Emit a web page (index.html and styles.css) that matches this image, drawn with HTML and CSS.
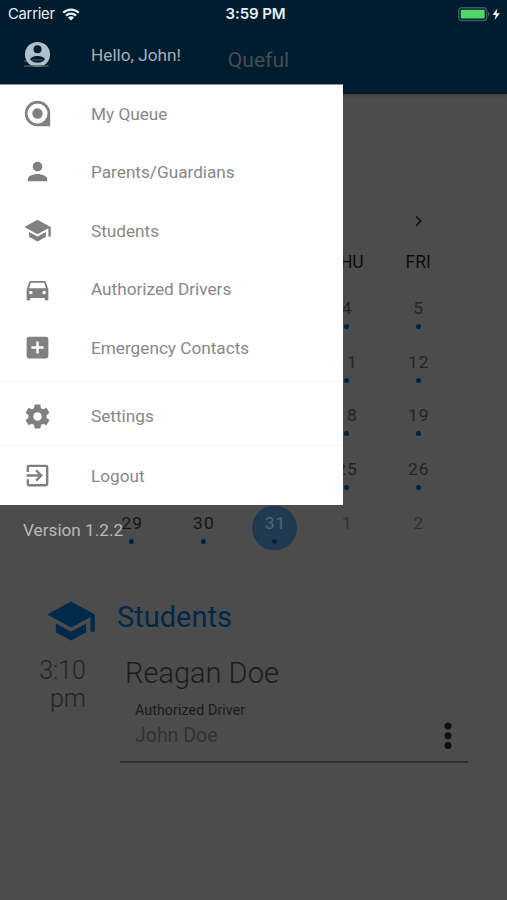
FILE: index.html
```
<!DOCTYPE html>
<html lang="en">
<head>
<meta charset="utf-8">
<title>Queful</title>
<link rel="stylesheet" href="styles.css">
</head>
<body>
<div class="screen">
  <header class="appbar">
    <div class="status">
      <div class="carrier"><span>Carrier</span>
        <svg class="wifi" viewBox="0 0 18 13"><path d="M1.2 4.8a11 11 0 0 1 15.6 0M4 7.8a7 7 0 0 1 10 0" fill="none" stroke="currentColor" stroke-width="2.3"/><path d="M9 12.6 5.9 9.5a4.4 4.4 0 0 1 6.2 0z" fill="currentColor"/></svg>
      </div>
      <div class="clock">3:59 PM</div>
      <svg class="battery" viewBox="0 0 46 16"><rect x="1.7" y="1.7" width="28" height="12.8" rx="3.2" fill="none" stroke="#40586a" stroke-width="1.4"/><path d="M31 5.5c2 .5 2 4.6 0 5.100z" fill="#40586a"/><rect x="3.700" y="3.700" width="24" height="8.800" rx="1" fill="#4cd964"/><path d="M40.400 2.500 35.500 9h3.300l-1.100 5L42.900 7.200h-3.400z" fill="#f2f7fa"/></svg>
    </div>
    <div class="title">Queful</div>
  </header>

  <main>
    <section class="calendar">
      <div class="month-nav"><svg viewBox="0 0 24 24"><path d="m8.600 16.600 4.600-4.600-4.600-4.600L10 6l6 6-6 6z" fill="currentColor"/></svg></div>
      <div class="grid weekdays"><span></span><span></span><span></span><span>THU</span><span>FRI</span></div>
      <div class="grid week"><span></span><span></span><span></span><span class="day">4</span><span class="day">5</span></div>
      <div class="grid week"><span></span><span></span><span></span><span class="day">11</span><span class="day">12</span></div>
      <div class="grid week"><span></span><span></span><span></span><span class="day">18</span><span class="day">19</span></div>
      <div class="grid week"><span></span><span></span><span></span><span class="day">25</span><span class="day">26</span></div>
      <div class="grid week"><span class="day dark">29</span><span class="day dark">30</span><span class="day selected">31</span><span class="day next">1</span><span class="day next">2</span></div>
    </section>

    <section class="students">
      <div class="section-head">
        <svg viewBox="0 0 24 24"><path d="M5 13.200v4L12 21l7-3.800v-4L12 17zM12 3 1 9l11 6 9-4.900V17h2V9z" fill="currentColor"/></svg>
        <h2>Students</h2>
      </div>
      <div class="pickup">
        <div class="time">3:10<br>pm</div>
        <div class="student">
          <div class="name">Reagan Doe</div>
          <div class="driver">
            <div><div class="label">Authorized Driver</div><div class="value">John Doe</div></div>
            <svg class="more" viewBox="0 0 8 28"><circle cx="4" cy="4" r="3.500"/><circle cx="4" cy="13.700" r="3.500"/><circle cx="4" cy="23.400" r="3.500"/></svg>
          </div>
        </div>
      </div>
    </section>
  </main>

  <aside class="drawer">
    <div class="greeting">
      <svg class="icon" viewBox="0 0 24 24"><path d="M1 17.500h20M1 21.500h20" stroke="#474d50" stroke-width="1.300"/><circle cx="12" cy="12" r="10.400" fill="#b0bfca"/><circle cx="12" cy="7.600" r="3.300" fill="#001c2f"/><path d="M6 16.200c0-2 3.300-3 6-3s6 1 6 3c-1.400 1.800-3.700 2.600-6 2.600s-4.600-.8-6-2.600z" fill="#001c2f"/><path d="M7.500 16.500h9" stroke="#474d50" stroke-width="1"/><path d="M1 21.500h20" stroke="#474d50" stroke-width="1.300" opacity=".8"/></svg>
      <span>Hello, John!</span>
    </div>
    <nav class="menu">
      <a class="item queue"><svg class="icon" viewBox="0 0 24 24"><path fill-rule="evenodd" d="M22.500 22.500H12A10.500 10.500 0 1 1 22.500 12zM12 3.700a8.300 8.300 0 1 0 0 16.600 8.300 8.300 0 0 0 0-16.600z"/><circle cx="12" cy="12" r="4.300"/></svg><span>My Queue</span></a>
      <a class="item parents"><svg class="icon" viewBox="0 0 24 24"><circle cx="12" cy="8" r="4"/><path d="M4 20v-2c0-2.700 5.300-4 8-4s8 1.300 8 4v2z"/></svg><span>Parents/Guardians</span></a>
      <a class="item pupils"><svg class="icon" viewBox="0 0 24 24"><path d="M5 13.200v4L12 21l7-3.800v-4L12 17zM12 3 1 9l11 6 9-4.900V17h2V9z"/></svg><span>Students</span></a>
      <a class="item drivers"><svg class="icon" viewBox="0 0 24 24"><path fill-rule="evenodd" d="M18.900 6c-.2-.6-.8-1-1.400-1h-11c-.7 0-1.200.4-1.400 1L3 12v8c0 .6.500 1 1 1h1c.6 0 1-.4 1-1v-1h12v1c0 .6.500 1 1 1h1c.6 0 1-.4 1-1v-8zM6.500 16a1.500 1.500 0 1 1 0-3 1.500 1.500 0 0 1 0 3zm11 0a1.500 1.500 0 1 1 0-3 1.500 1.500 0 0 1 0 3zM5 11l1.500-4.500h11L19 11z"/></svg><span>Authorized Drivers</span></a>
      <a class="item emergency"><svg class="icon" viewBox="0 0 24 24"><path fill-rule="evenodd" d="M19 3H5a2 2 0 0 0-2 2v14c0 1.100.9 2 2 2h14a2 2 0 0 0 2-2V5a2 2 0 0 0-2-2zm-2 10h-4v4h-2v-4H7v-2h4V7h2v4h4z"/></svg><span>Emergency Contacts</span></a>
      <a class="item settings"><svg class="icon" viewBox="0 0 24 24"><path fill-rule="evenodd" d="M19.430 12.980c.04-.32.070-.64.070-.98s-.030-.66-.070-.98l2.110-1.650c.19-.15.240-.42.120-.64l-2-3.460c-.12-.22-.39-.3-.61-.22l-2.490 1c-.52-.4-1.080-.73-1.690-.98l-.38-2.650A.49.490 0 0 0 14 2h-4c-.25 0-.46.180-.49.420l-.38 2.650c-.61.250-1.170.59-1.690.98l-2.490-1c-.23-.09-.49 0-.61.220l-2 3.460c-.13.220-.07.490.12.640l2.110 1.650c-.04.320-.07.650-.07.980s.03.660.07.980l-2.110 1.650c-.19.150-.24.420-.12.640l2 3.460c.12.220.39.300.61.220l2.490-1c.52.400 1.080.730 1.690.980l.38 2.650c.03.240.24.420.49.420h4c.25 0 .46-.18.49-.42l.38-2.650c.61-.25 1.170-.59 1.690-.98l2.490 1c.23.090.49 0 .61-.22l2-3.460c.12-.22.070-.49-.12-.64zM12 15.500a3.500 3.500 0 1 1 0-7 3.500 3.500 0 0 1 0 7z"/></svg><span>Settings</span></a>
      <a class="item logout"><svg class="icon" viewBox="0 0 24 24"><path d="M10.090 15.590 11.500 17l5-5-5-5-1.410 1.410L12.670 11H3v2h9.670zM19 3H5a2 2 0 0 0-2 2v4h2V5h14v14H5v-4H3v4c0 1.100.9 2 2 2h14a2 2 0 0 0 2-2V5a2 2 0 0 0-2-2z"/></svg><span>Logout</span></a>
    </nav>
    <div class="version">Version 1.2.2</div>
  </aside>
</div>
</body>
</html>
```
FILE: styles.css
```
* { box-sizing: border-box; }
body { margin: 0; font-family: Roboto, "Liberation Sans", sans-serif; }
.screen { position: relative; width: 507px; height: 900px; overflow: hidden; background: #4c4c4c; }

.appbar { height: 94px; background: #001c2f; box-shadow: 0 1px 4px rgba(0, 0, 0, .25); }
.status { display: grid; grid-template-columns: 1fr auto 1fr; align-items: center; height: 28px; padding: 0 4px 0 8px; color: #e6eef4; }
.carrier { display: flex; align-items: center; gap: 7px; font: 400 14.800px/18px Inter, sans-serif; letter-spacing: -.25px; }
.wifi { width: 18px; height: 13px; }
.clock { font: 600 15px/18px Inter, sans-serif; letter-spacing: -.1px; }
.battery { width: 46px; height: 16px; justify-self: end; }
.title { margin-top: 19px; padding-left: 10px; text-align: center; font-size: 21px; line-height: 26px; letter-spacing: .05px; color: #474d50; }

.calendar { padding: 115px 53px 0 96px; }
.month-nav { display: flex; justify-content: flex-end; padding-right: 25px; height: 24px; color: #161616; }
.month-nav svg { width: 21px; height: 24px; }
.grid { display: grid; grid-template-columns: repeat(5, 71.600px); justify-items: center; }
.weekdays { height: 60px; padding-top: 19px; font-size: 17.500px; line-height: 20px; color: #0c0c0c; }
.week { height: 53.700px; }
.day { display: flex; flex-direction: column; align-items: center; width: 45px; height: 45px; padding-top: 5px; font-size: 17.400px; line-height: 20px; letter-spacing: 1px; text-indent: 1px; color: #252525; }
.day::after { content: ""; width: 5px; height: 5px; margin-top: 6px; border-radius: 50%; background: #002342; }
.dark { color: #151515; }
.selected { height: 55px; margin-top: -5px; padding-top: 10px; background: radial-gradient(circle at 50% 25px, #203b51 22px, transparent 22.800px); color: #526574; }
.next { color: #323232; }
.next::after { background: none; }

.students { padding: 31px 39px 0 35px; }
.section-head { display: flex; align-items: center; gap: 20px; height: 52px; padding-left: 10px; color: #00294a; }
.section-head svg { width: 52px; height: 52px; margin-top: 6px; }
h2 { margin: -3px 0 0; font-size: 29px; font-weight: 400; line-height: 36px; }
.pickup { display: grid; grid-template-columns: 51px 348px; gap: 34px; }
.time { padding-top: 13px; text-align: right; font-size: 25px; font-weight: 300; line-height: 28px; color: #242424; }
.name { padding: 11px 0 0 5px; font-size: 29px; font-weight: 300; line-height: 36px; color: #1c1c1c; }
.driver { display: flex; justify-content: space-between; height: 62px; margin-top: 10px; padding: 0 16px 0 15px; border-bottom: 2px solid #303030; }
.label { font-size: 14.200px; line-height: 18px; letter-spacing: .1px; color: #1b1b1b; }
.value { margin-top: 4px; font-size: 19.500px; line-height: 26px; color: #323232; }
.more { width: 8px; height: 28px; margin-top: 21px; fill: #101010; }

.drawer { position: absolute; left: 0; top: 28px; width: 343px; }
.greeting { display: flex; align-items: center; gap: 39px; height: 56px; padding: 0 0 3px 23px; font-size: 17.200px; color: #a3b0ba; }
.icon { flex: none; width: 29px; height: 29px; }
.menu { height: 421px; background: #fff; border-top: 1px solid #8796a2; }
.item { display: flex; align-items: center; gap: 39px; height: 58.700px; padding-left: 23px; font-size: 17.200px; color: #888; }
.item svg { fill: #808080; }
.queue { height: 57.500px; }
.settings { height: 65px; margin-top: 4.200px; border-top: 1px solid #f3f3f3; border-bottom: 1px solid #f3f3f3; padding-top: 5px; }
.version { padding-top: 14px; padding-left: 23px; font-size: 17.200px; line-height: 22px; color: #b9b9b9; }
```
